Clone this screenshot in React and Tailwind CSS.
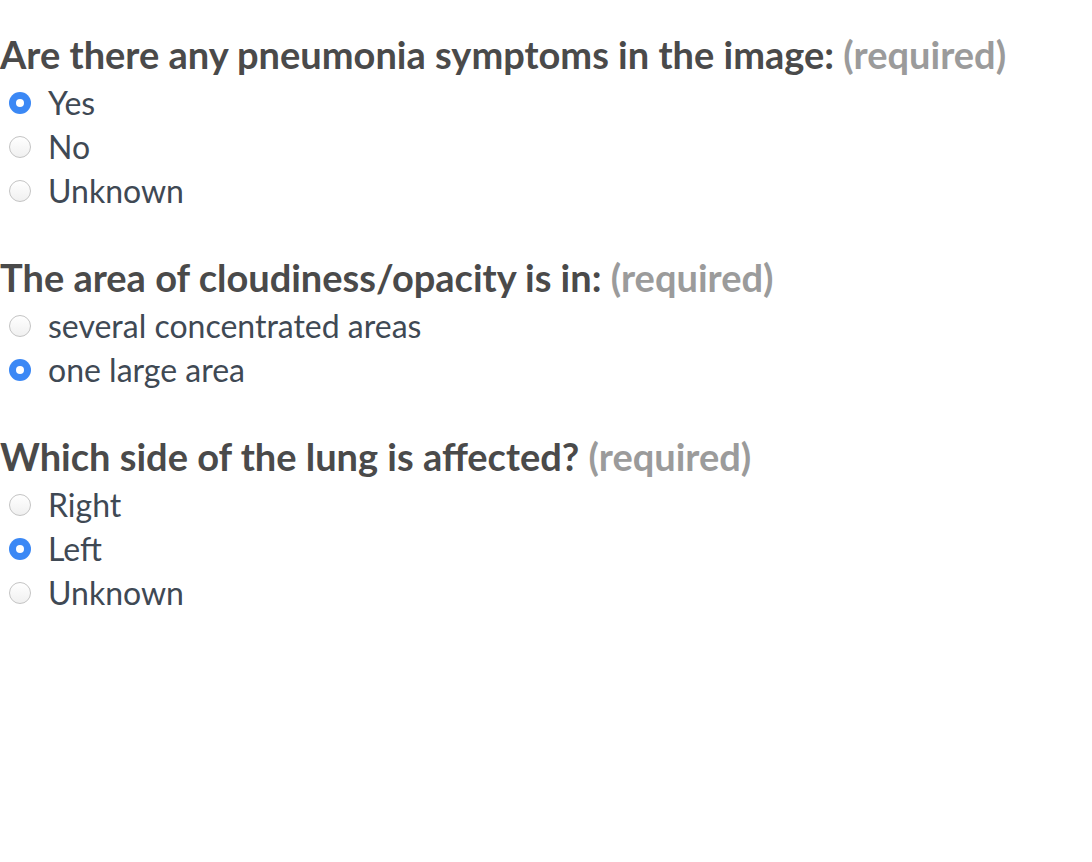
import React from 'react';

const questions = [
  { q: 'Are there any pneumonia symptoms in the image:', options: ['Yes', 'No', 'Unknown'], selected: 0 },
  { q: 'The area of cloudiness/opacity is in:', options: ['several concentrated areas', 'one large area'], selected: 1 },
  { q: 'Which side of the lung is affected?', options: ['Right', 'Left', 'Unknown'], selected: 1 },
];

function Radio({ checked }) {
  if (checked) {
    return (
      <span className="flex h-[22px] w-[22px] items-center justify-center rounded-full bg-[#3b88f5]">
        <span className="h-[8px] w-[8px] rounded-full bg-white" />
      </span>
    );
  }
  return <span className="h-[22px] w-[22px] rounded-full border border-[#c4c4c4] bg-gradient-to-b from-white to-[#f0f0f0]" />;
}

export default function App() {
  return (
    <div className="min-h-screen bg-white pt-[32px] font-['Lato',sans-serif]">
      {questions.map((item, i) => (
        <div key={i} className="mb-[42px]">
          <div className="text-[38px] font-bold leading-[44px] text-[#4a4a4a]">
            {item.q} <span className="text-[#9b9b9b]">(required)</span>
          </div>
          <div className="mt-[5px]">
            {item.options.map((opt, j) => (
              <label key={j} className="flex h-[44px] items-center">
                <span className="ml-[9px] mr-[17px] flex"><Radio checked={j === item.selected} /></span>
                <span className="text-[32px] text-[#3f4954]">{opt}</span>
              </label>
            ))}
          </div>
        </div>
      ))}
    </div>
  );
}
